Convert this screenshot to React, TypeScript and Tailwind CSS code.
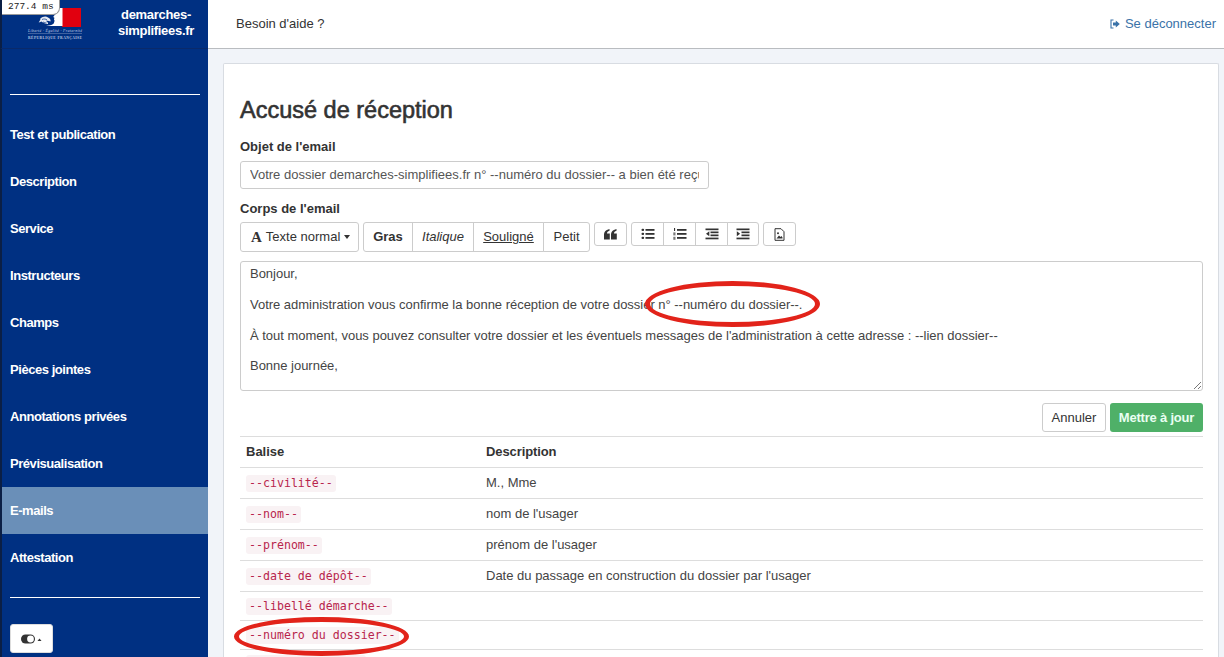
import React from "react";

const nav = ["Test et publication","Description","Service","Instructeurs","Champs","Pièces jointes","Annotations privées","Prévisualisation","E-mails","Attestation"];
const rows: [string,string,string][] = [
  ["--civilité--","M., Mme","h-[31px]"],
  ["--nom--","nom de l'usager","h-[31px]"],
  ["--prénom--","prénom de l'usager","h-[31px]"],
  ["--date de dépôt--","Date du passage en construction du dossier par l'usager","h-[31px]"],
  ["--libellé démarche--","","h-[29px]"],
  ["--numéro du dossier--","","h-[29px]"],
];

function Btn({children, className=""}:{children:React.ReactNode;className?:string}) {
  return <div className={"flex items-center justify-center bg-white border border-[#ccc] text-[13px] text-[#333] " + className}>{children}</div>;
}

function ListIcon({kind}:{kind:"ul"|"ol"|"out"|"in"}) {
  return (
    <svg width="14" height="12" viewBox="0 0 14 12" fill="#333">
      {kind==="ul" && <>
        <rect x="0.5" y="0.7" width="2.6" height="2.4" rx="1"/><rect x="0.5" y="4.7" width="2.6" height="2.4" rx="1"/><rect x="0.5" y="8.7" width="2.6" height="2.4" rx="1"/>
        <rect x="4.5" y="1" width="9" height="1.8"/><rect x="4.5" y="5" width="9" height="1.8"/><rect x="4.5" y="9" width="9" height="1.8"/>
      </>}
      {kind==="ol" && <>
        <rect x="1" y="0" width="1.1" height="3"/><rect x="0.3" y="4.4" width="2.2" height="3" opacity=".65"/><rect x="0.3" y="8.8" width="2.2" height="3" opacity=".65"/>
        <rect x="4" y="1" width="9.5" height="1.8"/><rect x="4" y="5" width="9.5" height="1.8"/><rect x="4" y="9" width="9.5" height="1.8"/>
      </>}
      {kind==="out" && <>
        <rect x="0.5" y="0.5" width="13" height="1.7"/><rect x="5.5" y="3.5" width="8" height="1.7"/><rect x="5.5" y="6.5" width="8" height="1.7"/><rect x="0.5" y="9.6" width="13" height="1.7"/>
        <path d="M4.3 3.2v5L1 5.7z"/>
      </>}
      {kind==="in" && <>
        <rect x="0.5" y="0.5" width="13" height="1.7"/><rect x="5.5" y="3.5" width="8" height="1.7"/><rect x="5.5" y="6.5" width="8" height="1.7"/><rect x="0.5" y="9.6" width="13" height="1.7"/>
        <path d="M0.8 3.2v5l3.3-2.5z"/>
      </>}
    </svg>
  );
}

function Logo() {
  return (
    <svg width="58" height="34" viewBox="0 0 58 34" className="ml-[24px] mt-[6px] shrink-0 self-start">
      <rect x="36" y="2" width="19" height="19" fill="#e1000f"/>
      <path d="M36.5 2H31c-.5 2-1.2 4-1.5 6-.7 1-1.8 2-2.3 3l1.2.8-.4 2 .6 1-.6 2c-.5 2-4 2.6-8 3.2H36.5z" fill="#fff"/>
      <path d="M14 13c3-2.8 6-3 8-1.5 2 1 3 2.6 2.5 4-1.5-.6-3-1-4.5-.6 1 .8 2.5 1.6 2 3-2.5.3-5.500-1.500-6.500-2.500-.6.400-1.600.900-2.800 1 .6-1 1.300-1.700 1.800-3.400z" fill="#fff" fillOpacity=".9"/>
      <path d="M16 13.500c2-.8 3.600-.6 5 .4M17 16c1.500.8 2.500 1 3.500 1" stroke="#003082" strokeWidth=".7" fill="none"/>
      <text x="29" y="26" textAnchor="middle" fontSize="3.9" fontStyle="italic" fill="#c9d4ea" style={{fontFamily:'"Liberation Serif", serif'}} textLength="54">Liberté · Égalité · Fraternité</text>
      <rect x="2" y="27" width="54" height="0.5" fill="#7f93bd"/>
      <text x="29" y="32.500" textAnchor="middle" fontSize="3.700" fontWeight="bold" fill="#b9c6e0" style={{fontFamily:'"Liberation Serif", serif'}} textLength="54">RÉPUBLIQUE FRANÇAISE</text>
    </svg>
  );
}

export default function App() {
  return (
    <div className="w-[1224px] h-[657px] overflow-hidden flex flex-col bg-[#f1f4f9] text-[#333] relative" style={{fontFamily:'"Liberation Sans", Arial, sans-serif'}}>
      <div className="absolute left-[2px] top-0 z-10 h-[15px] w-[58px] pl-[6px] bg-white rounded-br-[7px] border-r border-b border-[#999] text-[9.5px] leading-[14px] text-[#222]" style={{fontFamily:'"Liberation Mono", monospace'}}>277.4 ms</div>
      <div className="h-[49px] shrink-0 flex bg-white">
        <div className="w-[208px] shrink-0 bg-[#003082] border-l-2 border-l-[#0b1f45] border-b border-b-[#0a2a6a] flex">
          <Logo/>
          <div className="w-[76px] ml-[34px] mt-[7px] text-white font-bold text-[13px] leading-[16px] tracking-[-0.3px] text-center whitespace-nowrap">demarches-<br/>simplifiees.fr</div>
        </div>
        <div className="flex-1 flex items-center justify-between pl-[28px] pr-[8px] text-[13px] border-b border-[#b9bcc0]">
          <span className="text-[#333]">Besoin d'aide ?</span>
          <span className="flex items-center gap-[5px] text-[#3a72a8] text-[13px]">
            <svg width="10" height="10" viewBox="0 0 10 10"><path d="M3.500 1H1v8h2.500" fill="none" stroke="#3a72a8" strokeWidth="1.100"/><path d="M3 3.500h2.800V1.400L9.800 5 5.800 8.600V6.500H3z" fill="#3a72a8"/></svg>
            Se déconnecter
          </span>
        </div>
      </div>
      <div className="flex-1 min-h-0 flex">
        <div className="w-[208px] shrink-0 bg-[#003082] border-l-2 border-[#0b1f45] flex flex-col pt-[45px]">
          <div className="h-px bg-white ml-[8px] w-[190px]"/>
          <div className="mt-[16px] flex flex-col">
            {nav.map(n => (
              <div key={n} className={"h-[47px] flex items-center pl-[8px] text-[13px] font-bold text-white tracking-[-0.45px] " + (n==="E-mails" ? "bg-[#6a8fb8]" : "")}>{n}</div>
            ))}
          </div>
          <div className="h-px bg-white ml-[8px] w-[190px] mt-[16px]"/>
          <div className="ml-[8px] mt-[26px] w-[43px] h-[29px] bg-white rounded-[3px] border border-[#ddd] flex items-center justify-center">
            <svg width="24" height="12" viewBox="0 0 24 12"><rect x="1" y="1.500" width="14" height="9" rx="4.500" fill="#333"/><circle cx="10.500" cy="6" r="3.400" fill="#fff"/><path d="M17.500 8l2-2.500 2 2.500z" fill="#333"/></svg>
          </div>
        </div>
        <div className="flex-1 min-w-0 pl-[15px] pr-[5px] pt-[14px]">
          <div className="bg-white border border-[#d8dce2] border-b-0 rounded-t-[2px] h-[600px] pl-[16px] pr-[15px] overflow-hidden">
            <h1 className="mt-[33px] text-[23.500px] leading-[27px] text-[#333]" style={{fontWeight:500, WebkitTextStroke:"0.6px #333"}}>Accusé de réception</h1>
            <div className="mt-[14px] text-[13px] leading-[18px] font-bold">Objet de l'email</div>
            <div className="mt-[5px] w-[469px] h-[28px] border border-[#ccc] rounded-[3px] px-[9px] text-[13px] leading-[26px] text-[#555]">
              <div className="overflow-hidden whitespace-nowrap">Votre dossier demarches-simplifiees.fr n° --numéro du dossier-- a bien été reçu</div>
            </div>
            <div className="mt-[11px] text-[13px] leading-[18px] font-bold">Corps de l'email</div>
            <div className="mt-[4px] flex items-start">
              <Btn className="w-[119px] h-[30px] rounded-[3px] mr-[4px] justify-start pl-[10px]"><span className="font-bold text-[15px] mr-[4px]" style={{fontFamily:'"Liberation Serif", serif'}}>A</span><span>Texte normal</span><span className="ml-[4px] border-x-[3.500px] border-x-transparent border-t-[4px] border-t-[#333]"/></Btn>
              <div className="flex h-[30px] mr-[4px]">
                <Btn className="h-full w-[50px] rounded-l-[3px] font-bold">Gras</Btn>
                <Btn className="h-full w-[62px] ml-[-1px] italic">Italique</Btn>
                <Btn className="h-full w-[71px] ml-[-1px] underline">Souligné</Btn>
                <Btn className="h-full w-[47px] ml-[-1px] rounded-r-[3px]">Petit</Btn>
              </div>
              <Btn className="h-[24px] w-[33px] rounded-[3px] mr-[4px]">
                <svg width="13" height="11" viewBox="0 0 13 11" fill="#333"><path d="M0 6C0 3 1.500 1 5.500 0v1.800C3.800 2.300 3 3.300 3 4.500h2.800v6H0zM7 6C7 3 8.500 1 12.500 0v1.800C10.800 2.300 10 3.300 10 4.500h2.800v6H7z"/></svg>
              </Btn>
              <div className="flex h-[24px] mr-[4px]">
                <Btn className="h-full w-[33px] rounded-l-[3px]"><ListIcon kind="ul"/></Btn>
                <Btn className="h-full w-[33px] ml-[-1px]"><ListIcon kind="ol"/></Btn>
                <Btn className="h-full w-[33px] ml-[-1px]"><ListIcon kind="out"/></Btn>
                <Btn className="h-full w-[32px] ml-[-1px] rounded-r-[3px]"><ListIcon kind="in"/></Btn>
              </div>
              <Btn className="h-[24px] w-[33px] rounded-[3px]">
                <svg width="11" height="13" viewBox="0 0 11 13"><path d="M1 .7h6l3 3v8.600H1z" fill="#fff" stroke="#333"/><path d="M2.500 10.500 5 7.500l1.500 1.500 1-1 1 1.500v1z" fill="#333"/><circle cx="4" cy="5.300" r="1" fill="#333"/></svg>
              </Btn>
            </div>
            <div className="mt-[9px] relative h-[130px] border border-[#ccc] rounded-[3px] px-[9px] text-[13px] text-[#444] tracking-[-0.02px] overflow-hidden">
              <p className="mt-[3px] leading-[18px]">Bonjour,</p>
              <p className="mt-[13px] leading-[18px]">Votre administration vous confirme la bonne réception de votre dossier n° --numéro du dossier--.</p>
              <p className="mt-[13px] leading-[18px]">À tout moment, vous pouvez consulter votre dossier et les éventuels messages de l'administration à cette adresse : --lien dossier--</p>
              <p className="mt-[12px] leading-[18px]">Bonne journée,</p>
              <svg width="9" height="9" viewBox="0 0 9 9" className="absolute right-0 bottom-0"><path d="M1 8 8 1M5 8l3-3" stroke="#777" strokeWidth="1"/></svg>
            </div>
            <div className="mt-[12px] flex justify-end gap-[4px]">
              <div className="w-[64px] h-[29px] border border-[#ccc] rounded-[3px] flex items-center justify-center text-[13px]">Annuler</div>
              <div className="w-[93px] h-[29px] bg-[#4fb068] rounded-[3px] flex items-center justify-center text-[13px] font-bold text-[#e9fff2] tracking-[-0.2px]">Mettre à jour</div>
            </div>
            <div className="mt-[4px] border-t border-[#ddd]">
              <div className="h-[31px] flex items-center border-b border-[#ddd] text-[13px] font-bold">
                <div className="w-[246px] pl-[6px] shrink-0">Balise</div><div className="tracking-[-0.1px]">Description</div>
              </div>
              {rows.map(([a,b,h]) => (
                <div key={a} className={h + " flex items-center border-b border-[#ddd] text-[13px]"}>
                  <div className="w-[246px] pl-[6px] shrink-0">
                    <code className="bg-[#f9f2f4] text-[#b8254c] text-[11.600px] leading-[17px] rounded-[3px] px-[3px] inline-block" style={{fontFamily:'"DejaVu Sans Mono", monospace'}}>{a}</code>
                  </div>
                  <div className="text-[#444]">{b}</div>
                </div>
              ))}
              <div className="pl-[6px] pt-[5px]"><div className="w-[120px] h-[17px] bg-[#f9f2f4] rounded-[3px]"/></div>
            </div>
          </div>
        </div>
      </div>
      <div className="absolute left-[645px] top-[281px] w-[175px] h-[46px] rounded-[50%] border-[5px] border-[#e2231a]"/>
      <div className="absolute left-[234px] top-[617px] w-[175px] h-[39px] rounded-[50%] border-[5px] border-[#e2231a]"/>
    </div>
  );
}
